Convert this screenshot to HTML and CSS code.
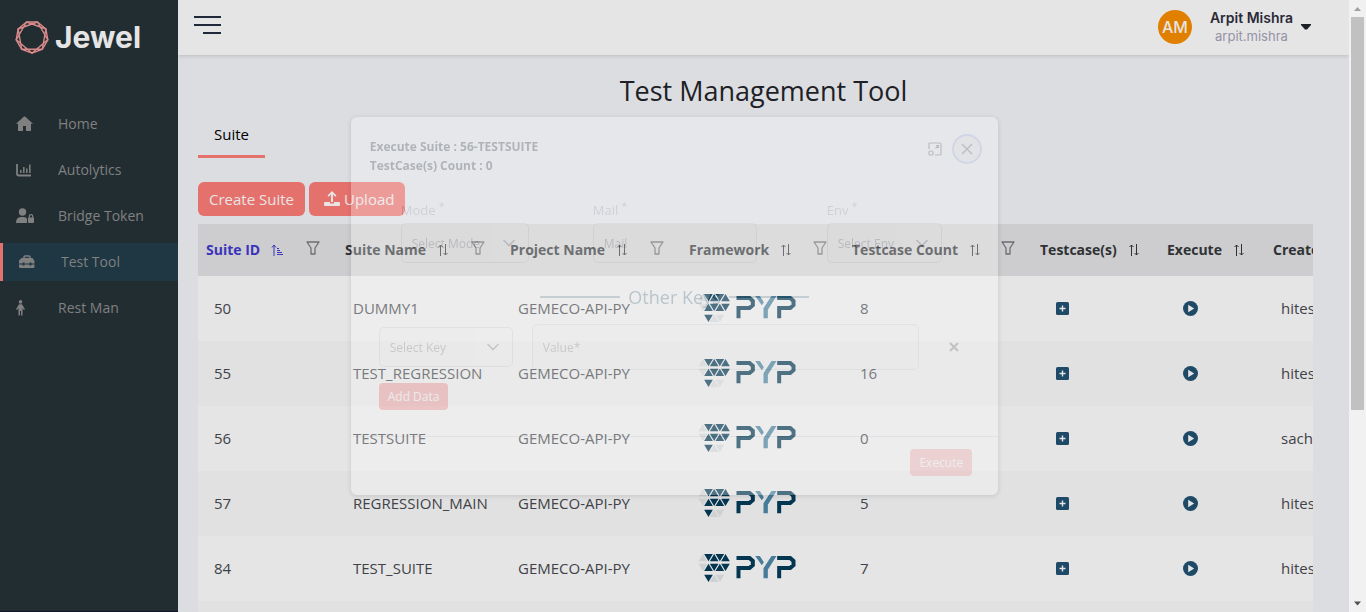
FILE: index.html
```html
<!DOCTYPE html>
<html lang="en">
<head>
<meta charset="utf-8">
<title>Jewel - Test Management Tool</title>
<link rel="stylesheet" href="styles.css">
</head>
<body>
<svg class="sprite" aria-hidden="true">
  <symbol id="pyp" viewBox="0 0 296 90">
    <g fill="#cfd0d2"><path d="M4 25 17 3l13 22zM4 32h26L17 54zM38 87l13-22 13 22zM55 65h26L68 87z"/></g>
    <g fill="#043651">
      <path d="M21 3h26L34 25zM38 25 51 3l13 22zM55 3h26L68 25zM72 25 85 3l13 22z"/>
      <path d="M21 54 34 32l13 22zM38 32h26L51 54zM55 54 68 32l13 22zM72 32h26L85 54z"/>
      <path d="M21 65h26L34 87z"/>
    </g>
    <g fill="none" stroke="#043651" stroke-width="12">
      <path d="M118 15h39l10 9v12l-10 9h-33v31M240 15h39l10 9v12l-10 9h-33v31"/>
    </g>
    <path d="M174 9h14l12 19-6 9zM223 9h15l-26 41v26h-13V46z" fill="#467c99"/>
  </symbol>
  <symbol id="sort" viewBox="0 0 12 12"><path d="M3.500 12V1M1.500 3 3.500 1l2 2M8.500 0v11M6.500 9l2 2 2-2" fill="none" stroke="currentColor" stroke-width="1"/></symbol>
  <symbol id="filter" viewBox="0 0 14 14"><path d="M1 1h12L9 7v6H5V7z" fill="none" stroke="currentColor" stroke-width="1.300" stroke-linejoin="round"/></symbol>
  <symbol id="plus" viewBox="0 0 13 13"><rect width="13" height="13" rx="1.500" fill="#1e4a68"/><path d="M6.500 3.500v6M3.500 6.500h6" stroke="#e5e5e5" stroke-width="1.400"/></symbol>
  <symbol id="play" viewBox="0 0 15 15"><circle cx="7.500" cy="7.500" r="7.500" fill="#1e4a68"/><path d="M5.200 3.800 11.200 7.500l-6 3.700z" fill="#e5e5e5"/></symbol>
  <symbol id="chevron" viewBox="0 0 14 14"><path d="m1.500 4 5.500 5.500L12.500 4" fill="none" stroke="currentColor" stroke-width="1.600"/></symbol>
</svg>
<div class="app">
  <aside class="sidebar">
    <a class="brand" href="#">
      <svg width="34" height="34" viewBox="0 0 34 34" fill="none" stroke="#d98a8a" stroke-width="1.400" stroke-linejoin="round">
        <path d="M22.500 2 30.900 9l1.900 10.800-5.500 9.500L17 33 6.700 29.300 1.200 19.800 3.100 9l8.400-7z"/>
        <path d="M22.500 2l10.300 17.800L17 33 1.200 19.800 11.500 2l19.400 7-3.600 20.300H6.700L3.100 9z"/>
      </svg>
      <span>Jewel</span>
    </a>
    <nav class="menu">
      <a href="#"><svg width="18" height="16" viewBox="0 0 18 16"><path d="M8 .5 0 7.800h2V15h5v-5h3v5h5V7.800h2L9 .5z" fill="currentColor"/></svg>Home</a>
      <a href="#"><svg width="18" height="16" viewBox="0 0 18 16" fill="none" stroke="currentColor"><path d="M1 2v9.500q0 2 2 2h12" stroke-width="1.800"/><path d="M4.800 11V8M7.800 11V5M10.800 11V6.500M13.800 11V2.500" stroke-width="1.500"/></svg>Autolytics</a>
      <a href="#"><svg width="18" height="16" viewBox="0 0 18 16"><g fill="currentColor"><circle cx="6.500" cy="4" r="3.700"/><path d="M0 15q0-6 5-6h3q2 0 3 1.500V15z"/><rect x="12" y="9.500" width="6" height="5.500" rx=".8"/></g><path d="M13.300 10V8.200q0-1.500 1.700-1.500t1.700 1.500V10" fill="none" stroke="currentColor" stroke-width="1.200"/></svg>Bridge Token</a>
      <a href="#" class="active"><svg width="18" height="16" viewBox="0 0 18 16"><path d="M5 4V2.800Q5 2 6 2h4q1 0 1 .8V4" fill="none" stroke="currentColor" stroke-width="1.500"/><path d="M2.500 4h11l2 3v2.500h-3v-1h-2v1h-5v-1h-2v1H0V6.500zM0 10.500h3.500v1h2v-1h5v1h2v-1h3V13q0 1-1 1H1q-1 0-1-1z" fill="currentColor"/></svg>Test Tool</a>
      <a href="#"><svg width="18" height="16" viewBox="0 0 18 16" fill="currentColor"><circle cx="4.500" cy="1.900" r="1.800"/><path d="M3 4.200h3l3 5-1.200.8-1.300-2V15.500H5V11H4v4.500H2.500V8L1.200 10 0 9.200z"/></svg>Rest Man</a>
    </nav>
  </aside>
  <div class="page">
    <header class="topbar">
      <button class="burger" aria-label="Toggle menu"><svg width="27" height="20" viewBox="0 0 27 20"><path d="M0 2h27M0 10h27M9 18h18" stroke="#20293a" stroke-width="1.800"/></svg></button>
      <button class="user">
        <span class="avatar">AM</span>
        <span class="who"><span class="name">Arpit Mishra</span><span class="login">arpit.mishra</span></span>
        <svg width="10" height="6" viewBox="0 0 10 6"><path d="M0 0h10v1L6 5.500H4L0 1z" fill="#1c2127"/></svg>
      </button>
    </header>
    <main class="content">
      <h1>Test Management Tool</h1>
      <div class="tabs"><button class="tab">Suite</button></div>
      <div class="actions">
        <button>Create Suite</button>
        <button class="upload"><svg width="16" height="16" viewBox="0 0 16 16" fill="currentColor"><path d="M8 0 12.500 4.500l-1.200 1.200L9 3.500V11H7V3.500L4.700 5.700 3.500 4.500zM1 11h5v1.500h4V11h5q1 0 1 1v2q0 1-1 1H1q-1 0-1-1v-2q0-1 1-1z"/></svg>Upload</button>
      </div>
      <div class="table-wrap">
        <table>
          <colgroup><col class="c1"><col class="c2"><col class="c3"><col class="c4"><col class="c5"><col class="c6"><col class="c7"><col class="c8"></colgroup>
          <thead><tr>
            <th class="sorted"><div>Suite ID<svg class="s" viewBox="0 0 12 12"><path d="M3 12V1M1 3.500 3 1l2 2.500M6 4.500h2M6 6.500h3M6 8.500h5M6 10.500h6" fill="none" stroke="currentColor"/></svg><svg class="f"><use href="#filter"/></svg></div></th>
            <th><div>Suite Name<svg class="s"><use href="#sort"/></svg><svg class="f"><use href="#filter"/></svg></div></th>
            <th><div>Project Name<svg class="s"><use href="#sort"/></svg><svg class="f"><use href="#filter"/></svg></div></th>
            <th><div>Framework<svg class="s"><use href="#sort"/></svg><svg class="f"><use href="#filter"/></svg></div></th>
            <th><div>Testcase Count<svg class="s"><use href="#sort"/></svg><svg class="f"><use href="#filter"/></svg></div></th>
            <th><div>Testcase(s)<svg class="s"><use href="#sort"/></svg></div></th>
            <th><div>Execute<svg class="s"><use href="#sort"/></svg></div></th>
            <th><div>Created By<svg class="s"><use href="#sort"/></svg></div></th>
          </tr></thead>
          <tbody>
            <tr><td>50</td><td>DUMMY1</td><td>GEMECO-API-PY</td><td><svg class="pyp" role="img" aria-label="PYP"><use href="#pyp"/></svg></td><td>8</td><td><button aria-label="Add"><svg width="13" height="13"><use href="#plus"/></svg></button></td><td><button aria-label="Run"><svg width="15" height="15"><use href="#play"/></svg></button></td><td>hitesh</td></tr>
            <tr><td>55</td><td>TEST_REGRESSION</td><td>GEMECO-API-PY</td><td><svg class="pyp" role="img" aria-label="PYP"><use href="#pyp"/></svg></td><td>16</td><td><button aria-label="Add"><svg width="13" height="13"><use href="#plus"/></svg></button></td><td><button aria-label="Run"><svg width="15" height="15"><use href="#play"/></svg></button></td><td>hitesh</td></tr>
            <tr><td>56</td><td>TESTSUITE</td><td>GEMECO-API-PY</td><td><svg class="pyp" role="img" aria-label="PYP"><use href="#pyp"/></svg></td><td>0</td><td><button aria-label="Add"><svg width="13" height="13"><use href="#plus"/></svg></button></td><td><button aria-label="Run"><svg width="15" height="15"><use href="#play"/></svg></button></td><td>sachin</td></tr>
            <tr><td>57</td><td>REGRESSION_MAIN</td><td>GEMECO-API-PY</td><td><svg class="pyp" role="img" aria-label="PYP"><use href="#pyp"/></svg></td><td>5</td><td><button aria-label="Add"><svg width="13" height="13"><use href="#plus"/></svg></button></td><td><button aria-label="Run"><svg width="15" height="15"><use href="#play"/></svg></button></td><td>hitesh</td></tr>
            <tr><td>84</td><td>TEST_SUITE</td><td>GEMECO-API-PY</td><td><svg class="pyp" role="img" aria-label="PYP"><use href="#pyp"/></svg></td><td>7</td><td><button aria-label="Add"><svg width="13" height="13"><use href="#plus"/></svg></button></td><td><button aria-label="Run"><svg width="15" height="15"><use href="#play"/></svg></button></td><td>hitesh</td></tr>
            <tr><td></td><td></td><td></td><td></td><td></td><td></td><td></td><td></td></tr>
          </tbody>
        </table>
      </div>
    </main>
  </div>
  <div class="scrollbar" aria-hidden="true">
    <svg width="17" height="17" viewBox="0 0 17 17"><path d="M5 11 8.500 7l3.500 4z" fill="#a0a0a0"/></svg>
    <div class="thumb"></div>
    <svg width="17" height="17" viewBox="0 0 17 17"><path d="M5 6.500h7L8.500 10.500z" fill="#505050"/></svg>
  </div>
</div>
<div class="overlay">
  <form class="modal" role="dialog" aria-labelledby="dlg-title">
    <div class="modal-head">
      <div id="dlg-title" class="modal-title"><div>Execute Suite : 56-TESTSUITE</div><div>TestCase(s) Count : 0</div></div>
      <button type="button" class="max" aria-label="Maximize"><svg width="14" height="14" viewBox="0 0 14 14" fill="none" stroke="currentColor" stroke-width="1.200"><path d="M1 7V2q0-1 1-1h10q1 0 1 1v10q0 1-1 1H7M7.500 6.500 10.500 3.500M8 3.500h2.500V6"/><rect x="1" y="9" width="4" height="4" rx="1"/></svg></button>
      <button type="button" class="close" aria-label="Close"><svg width="12" height="12" viewBox="0 0 12 12"><path d="m1 1 10 10M11 1 1 11" stroke="currentColor" stroke-width="1.500"/></svg></button>
    </div>
    <div class="modal-body">
      <div class="fields">
        <div class="field mode"><label for="mode">Mode <sup>*</sup></label><div class="combo"><select id="mode"><option>Select Mode</option></select><svg width="14" height="14"><use href="#chevron"/></svg></div></div>
        <div class="field mail"><label for="mail">Mail <sup>*</sup></label><input id="mail" type="text" placeholder="Mail"></div>
        <div class="field env"><label for="env">Env <sup>*</sup></label><div class="combo"><select id="env"><option>Select Env</option></select><svg width="14" height="14"><use href="#chevron"/></svg></div></div>
      </div>
      <div class="divider">Other Keys</div>
      <div class="keys">
        <div class="combo"><select aria-label="Key"><option>Select Key</option></select><svg width="14" height="14"><use href="#chevron"/></svg></div>
        <input type="text" aria-label="Value" placeholder="Value*">
        <button type="button" aria-label="Remove"><svg width="10" height="10" viewBox="0 0 10 10"><path d="m1 1 8 8M9 1 1 9" stroke="currentColor" stroke-width="2"/></svg></button>
      </div>
      <button type="button" class="btn">Add Data</button>
    </div>
    <div class="modal-foot"><button type="button" class="btn" disabled>Execute</button></div>
  </form>
</div>
</body>
</html>
```
FILE: styles.css
```css
* { box-sizing: border-box; }
body { margin: 0; background: #dcdde1; color: #3f4248; font: 15px/24px "Open Sans", "Noto Sans", sans-serif; overflow: hidden; }
button { border: 0; margin: 0; padding: 0; background: none; font: inherit; color: inherit; }
a { color: inherit; text-decoration: none; }
svg { display: block; flex: none; }
.sprite { display: none; }
.app { display: flex; height: 100vh; overflow: hidden; }

.sidebar { width: 178px; flex: none; background: #222d32; border-bottom: 1px solid #14162a; }
.brand { display: flex; align-items: center; gap: 6px; height: 73px; padding-left: 15px; color: #e5e5e5; font: 700 30px/40px Inter, sans-serif; }
.menu { display: flex; flex-direction: column; gap: 8px; padding-top: 32px; color: #808080; font-size: 14px; }
.menu a { display: flex; align-items: center; gap: 24px; height: 38px; padding-left: 16px; }
.menu .active { background: #1f3643; border-left: 3px solid #e5716d; }

.page { flex: 1; min-width: 0; display: flex; flex-direction: column; overflow: hidden; }
.topbar { display: flex; justify-content: space-between; align-items: center; height: 55px; flex: none; padding: 0 38px 2px 16px; background: #e5e5e5; box-shadow: 0 1px 4px rgba(0, 0, 0, .15); }
.burger { padding-bottom: 3px; }
.user { display: flex; align-items: center; gap: 8px; }
.avatar { width: 34px; height: 34px; margin-right: 10px; border-radius: 50%; background: #e17f00; color: #e5e5e5; font: 500 16px/34px Inter, sans-serif; }
.who { display: flex; flex-direction: column; font: 600 14px/18px Inter, sans-serif; color: #2a2a38; }
.login { font-size: 13px; font-weight: 400; color: #9492a6; }

.content { padding-top: 18px; }
h1 { margin: 0; text-align: center; font-size: 27px; line-height: 36px; font-weight: 500; color: #1d2126; }
.tabs { display: flex; padding: 4px 20px 0; }
.tab { height: 45px; padding: 0 16px; border-bottom: 3px solid #e5716d; color: #000; font-weight: 500; }
.actions { display: flex; gap: 4px; padding: 24px 20px 8px; }
.actions button { display: flex; align-items: center; gap: 4px; height: 34px; padding: 0 11px; border-radius: 6px; background: #e5716d; color: #e9e4e4; }
.actions .upload { padding-left: 15px; }

.table-wrap { margin: 0 36px 0 20px; overflow: hidden; }
table { width: 1227px; table-layout: fixed; border-collapse: collapse; }
.c1 { width: 139px; } .c2 { width: 165px; } .c3 { width: 179px; } .c4 { width: 163px; }
.c5 { width: 188px; } .c6 { width: 127px; } .c7 { width: 106px; } .c8 { width: 160px; }
th { height: 52px; padding: 0 17px 0 8px; background: #cdcdcf; color: #2f3235; text-align: left; font-size: 14px; font-weight: 700; white-space: nowrap; }
th div { display: flex; align-items: center; }
th.sorted { color: #3b33ba; }
.s { width: 12px; height: 12px; margin-left: 11px; }
.f { width: 14px; height: 14px; margin-left: auto; margin-bottom: 5px; color: #6c6e70; }
td { height: 65px; padding: 0 16px 2px; white-space: nowrap; }
td button { display: block; padding: 2px 8px 0; }
tbody tr { background: #e5e5e5; }
tbody tr:nth-child(even) { background: #e1e1e1; }
.pyp { width: 99px; height: 30px; }

.scrollbar { width: 17px; flex: none; display: flex; flex-direction: column; background: #f1f1f1; }
.thumb { flex: 1; margin: 0 2px; background: linear-gradient(#c1c1c1, #c1c1c1) top / 100% 68% no-repeat; }

.overlay { position: fixed; inset: 0 17px 0 0; display: flex; align-items: center; justify-content: center; }
.modal { width: 48%; min-width: 640px; opacity: .3; background: #fff; border-radius: 6px; box-shadow: 0 1px 4px 1px rgba(0, 0, 0, .3); color: #495057; font-size: 12px; line-height: 19px; }
.modal-head { display: flex; align-items: flex-start; padding: 17px 16px 16px 19px; }
.modal-title { flex: 1; padding-top: 3px; font-weight: 700; }
.max { padding: 8px 10px; color: #70757b; }
.close { display: grid; place-items: center; width: 30px; height: 30px; border: 2px solid #bcc4f0; border-radius: 50%; background: #f2f2f5; color: #70757b; }
.modal-body { padding: 7px 28px 26px; }
.fields { display: flex; padding-left: 22px; color: #b0b3b8; }
.field label { display: block; height: 25px; font-size: 13px; line-height: 24px; }
sup { font-size: 10px; line-height: 0; }
.mode { width: 128px; margin-right: 64px; }
.mail { width: 164px; margin-right: 70px; }
.env { width: 115px; }
.combo { display: flex; align-items: center; height: 40px; padding-right: 12px; border: 1px solid #d4d6da; border-radius: 5px; color: #858a90; }
.combo svg { margin-left: 12px; }
select { appearance: none; flex: 1; min-width: 0; height: 38px; padding: 0 0 0 10px; border: 0; border-radius: 5px 0 0 5px; background: #fafafa; color: #8a8d92; font: inherit; font-size: 12px; opacity: 1; }
input { width: 100%; height: 40px; padding: 0 10px; border: 1px solid #d8dadd; border-radius: 5px; background: #fafafa; font: inherit; font-size: 12px; }
input::placeholder { color: #8a8d92; opacity: 1; }
.divider { display: flex; align-items: center; justify-content: center; gap: 8px; padding: 21px 0 14px; color: #50758c; font-size: 18px; line-height: 26px; }
.divider::before, .divider::after { content: ""; width: 80px; height: 2px; background: #7896a5; }
.keys { display: flex; align-items: center; gap: 19px; margin-bottom: 13px; }
.keys .combo { width: 134px; }
.keys input { flex: 1; height: 46px; }
.keys button { padding: 10px 11px; color: #70757b; }
.btn { height: 27px; padding: 0 9px; border-radius: 4px; background: #f87a7c; color: #fff; font-size: 12px; font-weight: 500; }
.btn:disabled { opacity: .7; }
.modal-foot { display: flex; justify-content: flex-end; padding: 12px 26px 19px; border-top: 1px solid #d4d6da; }
```
